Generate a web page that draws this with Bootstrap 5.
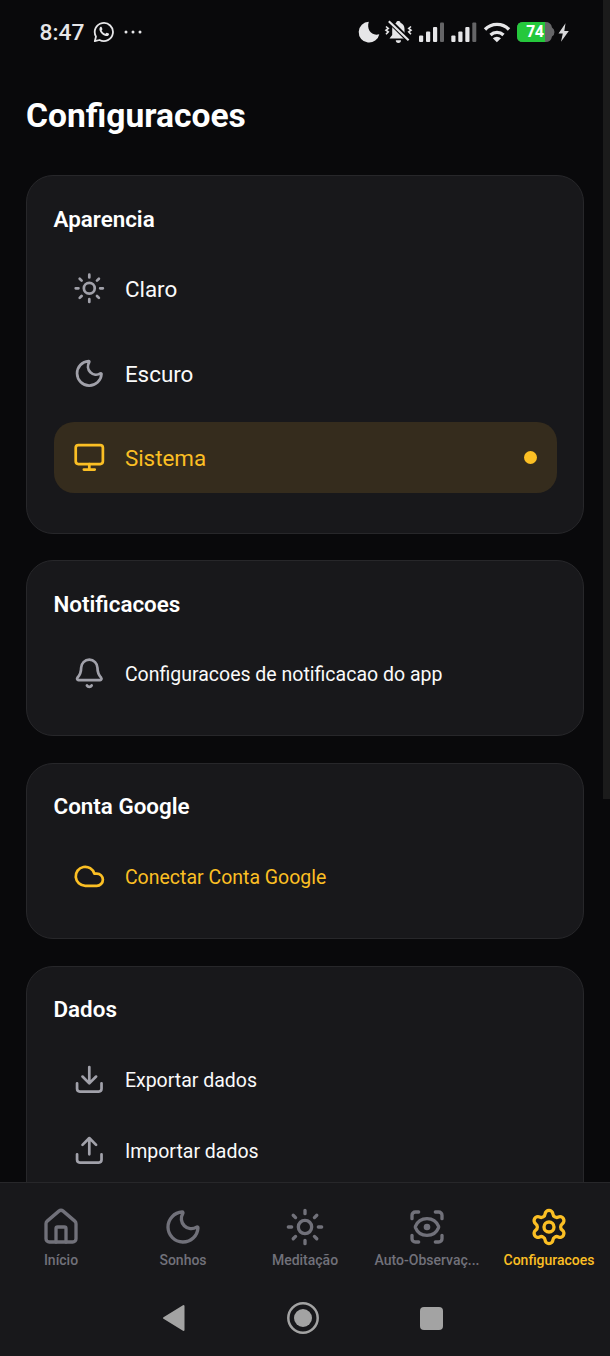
<!DOCTYPE html>
<html lang="pt-BR" data-bs-theme="dark">
<head>
<meta charset="utf-8">
<meta name="viewport" content="width=device-width, initial-scale=1">
<title>Configuracoes</title>
<link href="https://cdn.jsdelivr.net/npm/bootstrap@5.3.0/dist/css/bootstrap.min.css" rel="stylesheet">
<style>
  body { background: #09090b; color: #fafafa; font-family: Roboto, "Liberation Sans", sans-serif; }
  svg { display: block; flex: none; }
  .line-icon { fill: none; stroke: currentColor; stroke-width: 2; stroke-linecap: round; stroke-linejoin: round; }
  .status-bar { height: 63px; padding: 0 40px 0 39.5px; color: #e6e6e8; }
  .clock { font-size: 22.8px; line-height: 27px; font-weight: 500; padding-top: 2px; }
  .chat-icon { margin-left: 9px; }
  .more-dots { margin-left: 8.5px; }
  .scroll-thumb { top: 0; right: 0; width: 7px; height: 799px; background: #1b1b1b; }
  .page-title { font-size: 33.6px; line-height: 40px; font-weight: 700; margin: 33px 26px 39.4px; }
  .stack { gap: 26.5px; padding: 0 26px; }
  .panel { background: #18181b; border: 1px solid #27272a; border-radius: 27px; padding: 26.5px; flex: none; }
  .panel-title { font-size: 22.4px; line-height: 32px; font-weight: 600; margin: 0 0 17.8px; }
  .option { height: 71.5px; border-radius: 20px; padding: 0 19.5px 0 19.2px; gap: 19.6px; font-size: 19.5px; }
  .option .line-icon { width: 32.6px; height: 32.6px; color: #a1a1aa; }
  .option-label { padding-top: 3px; }
  .theme-option { font-size: 22.4px; margin-bottom: 13px; }
  .accent, .option.accent .line-icon { color: #fbbf24; }
  .theme-option.selected { background: #352c1d; }
  .dot { width: 13px; height: 13px; background: #fbbf24; }
  .bottom-bar { height: 174px; background: #18181b; border-top: 1px solid #27272a; }
  .tab { width: 20%; padding-top: 24px; color: #71717a; font-size: 14px; line-height: 18px; font-weight: 500; }
  .tab .line-icon { width: 40px; height: 40px; margin-bottom: 4px; }
  .tab.accent { color: #fbbf24; }
  .tab-label { white-space: nowrap; }
  .sys-nav { padding: 32px 166px 0 161px; color: #a3a3a3; }
</style>
</head>
<body class="vh-100 overflow-hidden d-flex flex-column position-relative">

<header class="status-bar d-flex align-items-center flex-shrink-0">
  <span class="clock">8:47</span>
  <svg class="chat-icon" width="22" height="22" viewBox="0 0 22 22" fill="none" stroke="currentColor" stroke-width="1.8" stroke-linejoin="round">
    <path d="M1.8 20.2 3 15.6A9.1 9.1 0 1 1 6.5 19Z"/>
    <path d="M7.2 6.1c.5-.6 1.2-.5 1.4 0l.8 1.8c.2.5-.7 1.2-.7 1.5.5 1.5 2 2.800 3.600 3.400.5 0 1-1.200 1.500-1.100l1.900.9c.5.3.4 1-.1 1.600-.8.9-2 1.200-3.600.6-2.500-.9-4.500-2.900-5.300-5.100-.5-1.500-.2-2.700.5-3.600Z" fill="currentColor" stroke="none"/>
  </svg>
  <svg class="more-dots" width="18" height="4" viewBox="0 0 18 4" fill="currentColor"><circle cx="2" cy="2" r="1.500"/><circle cx="9" cy="2" r="1.500"/><circle cx="16" cy="2" r="1.500"/></svg>

  <svg class="ms-auto" width="212" height="26" viewBox="358 18 212 26" fill="#e6e6e8">
    <path d="M368.800 20.800A10.400 10.400 0 1 0 379.300 33.200C371.500 35.500 366.300 28.500 368.800 20.800Z"/>
    <!-- silenced bell -->
    <path d="M389.500 37.500h17.500l-2.500-3.500v-6c0-3-1.600-5.300-4-6.200 0-2.400-4.300-2.400-4.300 0-2.500.9-4 3.200-4 6.200v6Z"/>
    <path d="M395.800 39.300h5.200a2.600 2.600 0 0 1-5.200 0Z"/>
    <path d="m389 19.500 19.500 19.500" stroke="#09090b" stroke-width="5"/>
    <path d="m388.800 20.200 19.800 19.100" stroke="#e6e6e8" stroke-width="2.200"/>
    <path d="m386 25.500 2.300 2-2.300 1.700 2.300 1.700-2.300 2.300M411 25.500l-2.300 2 2.300 1.700-2.300 1.700 2.300 2.300" fill="none" stroke="#e6e6e8" stroke-width="1.600"/>
    <g>
      <rect x="419" y="34.500" width="4.200" height="6.500" rx="1"/><rect x="426" y="30.500" width="4.200" height="10.500" rx="1"/><rect x="433" y="26" width="4.200" height="15" rx="1"/><rect x="440" y="21.500" width="4" height="19.500" rx="1" fill="#656567"/>
    </g>
    <g transform="translate(32.300)">
      <rect x="419" y="34.500" width="4.200" height="6.500" rx="1"/><rect x="426" y="30.500" width="4.200" height="10.500" rx="1"/><rect x="433" y="26" width="4.200" height="15" rx="1"/><rect x="440" y="21.500" width="4" height="19.500" rx="1" fill="#656567"/>
    </g>
    <path d="M485 28.500a16.500 16.500 0 0 1 24 0M490.500 34a9.500 9.500 0 0 1 13 0" fill="none" stroke="#e6e6e8" stroke-width="3.300"/>
    <path d="M492.800 37.300a6 6 0 0 1 8.200 0l-4.100 4Z"/>
    <path d="M523 21h22.500q5.500 0 6.500 5.500 2.500 1.500 2.500 4.500t-2.500 4.500q-1 5.500-6.500 5.500H523q-6 0-6-6v-8q0-6 6-6Z" fill="#656567"/>
    <path d="M523 21h22v20h-22q-6 0-6-6v-8q0-6 6-6Z" fill="#25c83c"/>
    <text x="535" y="36.300" text-anchor="middle" font-size="15.500" font-weight="700" font-family="Open Sans, sans-serif" fill="#fff">74</text>
    <path d="m565.500 22.300-7 10.300h4.300l-1.800 8.200 7.800-10.700h-4.500Z" fill="#d8d8da"/>
  </svg>
</header>

<div class="scroll-thumb position-absolute"></div>

<main class="flex-grow-1 overflow-hidden d-flex flex-column">
  <h1 class="page-title">Configuracoes</h1>
  <div class="stack d-flex flex-column">

    <section class="panel">
      <h2 class="panel-title">Aparencia</h2>
      <div class="option theme-option d-flex align-items-center">
        <svg class="line-icon" viewBox="0 0 24 24"><circle cx="12" cy="12" r="4"/><path d="M12 2v2M12 20v2M4.930 4.930l1.410 1.410M17.660 17.660l1.410 1.410M2 12h2M20 12h2M6.340 17.660l-1.410 1.410M19.070 4.930l-1.410 1.410"/></svg>
        <span class="option-label">Claro</span>
      </div>
      <div class="option theme-option d-flex align-items-center">
        <svg class="line-icon" viewBox="0 0 24 24"><path d="M20.985 12.486a9 9 0 1 1-9.473-9.472c.405-.022.617.460.402.803a6 6 0 0 0 8.268 8.268c.344-.215.825-.004.803.401"/></svg>
        <span class="option-label">Escuro</span>
      </div>
      <div class="option theme-option selected accent d-flex align-items-center">
        <svg class="line-icon" viewBox="0 0 24 24"><rect width="20" height="14" x="2" y="3" rx="2"/><path d="M8 21h8M12 17v4"/></svg>
        <span class="option-label">Sistema</span>
        <span class="dot rounded-circle ms-auto"></span>
      </div>
    </section>

    <section class="panel">
      <h2 class="panel-title">Notificacoes</h2>
      <div class="option d-flex align-items-center">
        <svg class="line-icon" viewBox="0 0 24 24"><path d="M10.268 21a2 2 0 0 0 3.464 0"/><path d="M3.262 15.326A1 1 0 0 0 4 17h16a1 1 0 0 0 .740-1.673C19.410 13.956 18 12.499 18 8A6 6 0 0 0 6 8c0 4.499-1.411 5.956-2.738 7.326"/></svg>
        <span class="option-label">Configuracoes de notificacao do app</span>
      </div>
    </section>

    <section class="panel">
      <h2 class="panel-title">Conta Google</h2>
      <div class="option accent d-flex align-items-center">
        <svg class="line-icon" viewBox="0 0 24 24"><path d="M17.500 19H9a7 7 0 1 1 6.710-9h1.790a4.500 4.500 0 1 1 0 9Z"/></svg>
        <span class="option-label">Conectar Conta Google</span>
      </div>
    </section>

    <section class="panel">
      <h2 class="panel-title">Dados</h2>
      <div class="option d-flex align-items-center">
        <svg class="line-icon" viewBox="0 0 24 24"><path d="M12 15V3M21 15v4a2 2 0 0 1-2 2H5a2 2 0 0 1-2-2v-4M7 10l5 5 5-5"/></svg>
        <span class="option-label">Exportar dados</span>
      </div>
      <div class="option d-flex align-items-center">
        <svg class="line-icon" viewBox="0 0 24 24"><path d="M12 3v12M17 8l-5-5-5 5M21 15v4a2 2 0 0 1-2 2H5a2 2 0 0 1-2-2v-4"/></svg>
        <span class="option-label">Importar dados</span>
      </div>
    </section>
  </div>
</main>

<footer class="bottom-bar flex-shrink-0 position-relative">
  <nav class="d-flex text-center">
    <div class="tab d-flex flex-column align-items-center">
      <svg class="line-icon" viewBox="0 0 24 24"><path d="M15 21v-8a1 1 0 0 0-1-1h-4a1 1 0 0 0-1 1v8"/><path d="M3 10a2 2 0 0 1 .709-1.528l7-6a2 2 0 0 1 2.582 0l7 6A2 2 0 0 1 21 10v9a2 2 0 0 1-2 2H5a2 2 0 0 1-2-2z"/></svg>
      <span class="tab-label">Início</span>
    </div>
    <div class="tab d-flex flex-column align-items-center">
      <svg class="line-icon" viewBox="0 0 24 24"><path d="M20.985 12.486a9 9 0 1 1-9.473-9.472c.405-.022.617.460.402.803a6 6 0 0 0 8.268 8.268c.344-.215.825-.004.803.401"/></svg>
      <span class="tab-label">Sonhos</span>
    </div>
    <div class="tab d-flex flex-column align-items-center">
      <svg class="line-icon" viewBox="0 0 24 24"><circle cx="12" cy="12" r="4"/><path d="M12 2v2M12 20v2M4.930 4.930l1.410 1.410M17.660 17.660l1.410 1.410M2 12h2M20 12h2M6.340 17.660l-1.410 1.410M19.070 4.930l-1.410 1.410"/></svg>
      <span class="tab-label">Meditação</span>
    </div>
    <div class="tab d-flex flex-column align-items-center">
      <svg class="line-icon" viewBox="0 0 24 24"><path d="M3 7V5a2 2 0 0 1 2-2h2M17 3h2a2 2 0 0 1 2 2v2M21 17v2a2 2 0 0 1-2 2h-2M7 21H5a2 2 0 0 1-2-2v-2"/><circle cx="12" cy="12" r="1"/><path d="M18.944 12.330a1 1 0 0 0 0-.660 7.500 7.500 0 0 0-13.888 0 1 1 0 0 0 0 .660 7.500 7.500 0 0 0 13.888 0"/></svg>
      <span class="tab-label">Auto-Observaç...</span>
    </div>
    <div class="tab accent d-flex flex-column align-items-center">
      <svg class="line-icon" viewBox="0 0 24 24"><path d="M9.671 4.136a2.340 2.340 0 0 1 4.659 0 2.340 2.340 0 0 0 3.319 1.915 2.340 2.340 0 0 1 2.330 4.033 2.340 2.340 0 0 0 0 3.831 2.340 2.340 0 0 1-2.330 4.033 2.340 2.340 0 0 0-3.319 1.915 2.340 2.340 0 0 1-4.659 0 2.340 2.340 0 0 0-3.320-1.915 2.340 2.340 0 0 1-2.330-4.033 2.340 2.340 0 0 0 0-3.831A2.340 2.340 0 0 1 6.350 6.051a2.340 2.340 0 0 0 3.319-1.915"/><circle cx="12" cy="12" r="3"/></svg>
      <span class="tab-label">Configuracoes</span>
    </div>
  </nav>
  <div class="sys-nav d-flex justify-content-between align-items-center">
    <svg width="25" height="32" viewBox="0 0 25 32" fill="currentColor" stroke="currentColor" stroke-width="2" stroke-linejoin="round"><path d="M3 16 22.500 4v24Z"/></svg>
    <svg width="34" height="34" viewBox="0 0 34 34"><circle cx="17" cy="17" r="14.700" fill="none" stroke="currentColor" stroke-width="2.500"/><circle cx="17" cy="17" r="9" fill="currentColor"/></svg>
    <svg width="25" height="25" viewBox="0 0 25 25"><rect x="1" y="1" width="23" height="23" rx="4" fill="currentColor"/></svg>
  </div>
</footer>

<script src="https://cdn.jsdelivr.net/npm/bootstrap@5.3.0/dist/js/bootstrap.bundle.min.js"></script>
</body>
</html>
